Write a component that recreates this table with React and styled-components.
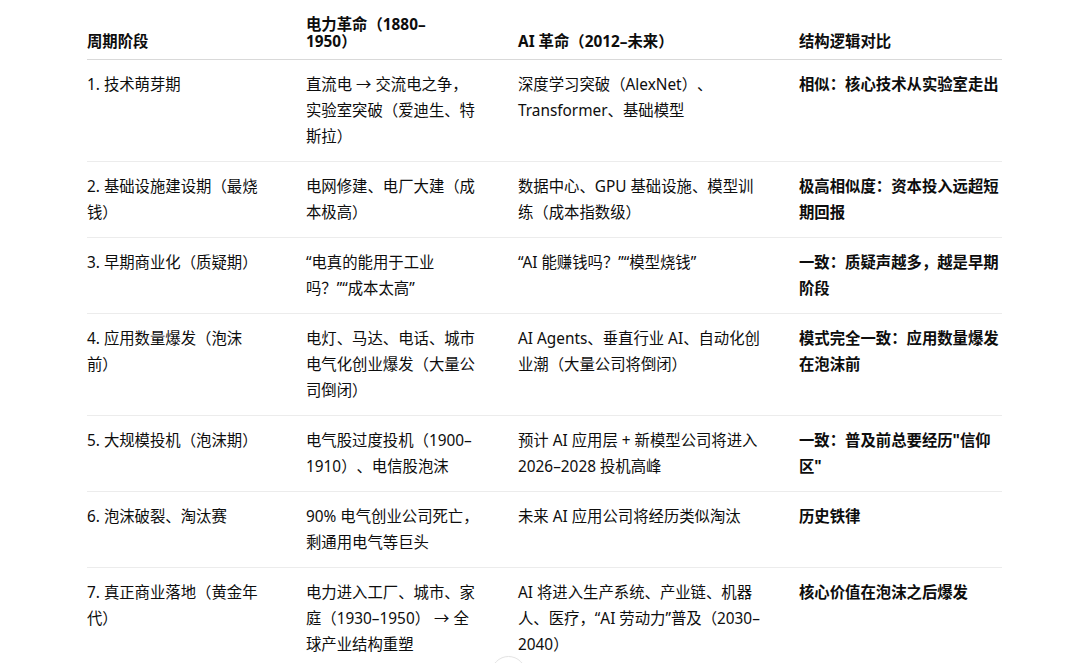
import React from "react";
import styled, { createGlobalStyle } from "styled-components";
import { ArrowDown } from "lucide-react";

const GlobalStyle = createGlobalStyle`
  html, body {
    margin: 0;
    padding: 0;
    background: #ffffff;
    overflow: hidden;
  }
  body {
    font-family: "Noto Sans", "Noto Sans CJK SC", sans-serif;
    color: #0d0d0d;
    text-spacing-trim: space-all;
  }
`;

// Styled components
const Page = styled.div`
  width: 915px;
  margin: 0 auto;
  padding-top: 8px;
`;

const Table = styled.table`
  width: 915px;
  table-layout: fixed;
  border-collapse: collapse;
  font-size: 15.36px;
`;

const Head = styled.th`
  text-align: left;
  vertical-align: bottom;
  font-weight: 700;
  line-height: 17px;
  padding: 8px 32px 9px 18px;
  border-bottom: 1px solid #d9d9d9;

  &:first-child {
    padding-left: 0;
  }
  &:last-child {
    padding-right: 0;
  }
`;

const Row = styled.tr`
  border-bottom: 1px solid #ececec;
`;

const Cell = styled.td`
  vertical-align: top;
  line-height: 26px;
  padding: 11.5px 20px 11.5px 18px;
  font-weight: ${(props) => (props.strong ? 700 : 400)};

  &:first-child {
    padding-left: 0;
  }
  &:last-child {
    padding-right: 0;
  }
`;

const ScrollButton = styled.button`
  position: fixed;
  left: 491px;
  top: 656px;
  width: 35px;
  height: 35px;
  border-radius: 50%;
  border: 1px solid #e3e3e3;
  background: #ffffff;
  display: flex;
  align-items: center;
  justify-content: center;
  color: #0d0d0d;
  padding: 0;
  box-shadow: 0 1px 3px rgba(0, 0, 0, 0.04);
`;

const columns = [201, 212, 281, 221];

const headers = ["周期阶段", "电力革命（1880–1950）", "AI 革命（2012–未来）", "结构逻辑对比"];

const rows = [
  [
    "1. 技术萌芽期",
    "直流电 → 交流电之争，实验室突破（爱迪生、特斯拉）",
    "深度学习突破（AlexNet）、Transformer、基础模型",
    "相似：核心技术从实验室走出",
  ],
  [
    "2. 基础设施建设期（最烧钱）",
    "电网修建、电厂大建（成本极高）",
    "数据中心、GPU 基础设施、模型训练（成本指数级）",
    "极高相似度：资本投入远超短期回报",
  ],
  [
    "3. 早期商业化（质疑期）",
    "“电真的能用于工业吗？”“成本太高”",
    "“AI 能赚钱吗？”“模型烧钱”",
    "一致：质疑声越多，越是早期阶段",
  ],
  [
    "4. 应用数量爆发（泡沫前）",
    "电灯、马达、电话、城市电气化创业爆发（大量公司倒闭）",
    "AI Agents、垂直行业 AI、自动化创业潮（大量公司将倒闭）",
    "模式完全一致：应用数量爆发在泡沫前",
  ],
  [
    "5. 大规模投机（泡沫期）",
    "电气股过度投机（1900–1910）、电信股泡沫",
    "预计 AI 应用层 + 新模型公司将进入 2026–2028 投机高峰",
    "一致：普及前总要经历\"信仰区\"",
  ],
  [
    "6. 泡沫破裂、淘汰赛",
    "90% 电气创业公司死亡，剩通用电气等巨头",
    "未来 AI 应用公司将经历类似淘汰",
    "历史铁律",
  ],
  [
    "7. 真正商业落地（黄金年代）",
    "电力进入工厂、城市、家庭（1930–1950） → 全球产业结构重塑",
    "AI 将进入生产系统、产业链、机器人、医疗，“AI 劳动力”普及（2030–2040）",
    "核心价值在泡沫之后爆发",
  ],
];

function App() {
  return (
    <>
      <GlobalStyle />
      <Page>
        <Table>
          <colgroup>
            {columns.map((w, i) => (
              <col key={i} style={{ width: `${w}px` }} />
            ))}
          </colgroup>
          <thead>
            <tr>
              {headers.map((h) => (
                <Head key={h}>{h}</Head>
              ))}
            </tr>
          </thead>
          <tbody>
            {rows.map((row, i) => (
              <Row key={i}>
                {row.map((text, j) => (
                  <Cell key={j} strong={j === 3}>
                    {text}
                  </Cell>
                ))}
              </Row>
            ))}
          </tbody>
        </Table>
      </Page>

      {/* scroll-to-bottom button, mostly below the fold */}
      <ScrollButton aria-label="Scroll down">
        <ArrowDown size={16} strokeWidth={2} />
      </ScrollButton>
    </>
  );
}

export default App;
